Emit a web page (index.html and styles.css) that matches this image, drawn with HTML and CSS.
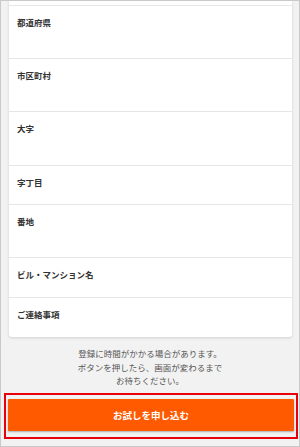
FILE: index.html
```html
<!DOCTYPE html>
<html lang="ja">
<head>
<meta charset="utf-8">
<link rel="stylesheet" href="styles.css">
</head>
<body>
<div class="frame">
  <div class="card">
    <div class="row tall"><span class="label">都道府県</span></div>
    <div class="row tall"><span class="label">市区町村</span></div>
    <div class="row taller"><span class="label">大字</span></div>
    <div class="row short"><span class="label">字丁目</span></div>
    <div class="row tall"><span class="label">番地</span></div>
    <div class="row mid"><span class="label">ビル・マンション名</span></div>
    <div class="row mid"><span class="label">ご連絡事項</span></div>
  </div>
  <p class="note">登録に時間がかかる場合があります。<br>ボタンを押したら、画面が変わるまで<br>お待ちください。</p>
  <div class="highlight">
    <button class="submit">お試しを申し込む</button>
  </div>
</div>
</body>
</html>
```

FILE: styles.css
```css
html, body {
  margin: 0;
  padding: 0;
}
body {
  font-family: "Noto Sans CJK JP", "Noto Sans", sans-serif;
  background: #f2f2f2;
}
.frame {
  box-sizing: border-box;
  width: 300px;
  height: 447px;
  border: 1px solid #c9c9c9;
  background: #f2f2f2;
  overflow: hidden;
  display: flex;
  flex-direction: column;
}
.card {
  margin: 0 7px 0 8px;
  padding-top: 4px;
  background: #fff;
  border-radius: 0 0 3px 3px;
  box-shadow: 0 1px 3px rgba(0, 0, 0, 0.14);
  display: flex;
  flex-direction: column;
}
.row {
  box-sizing: border-box;
  border-top: 1px solid #e6e6e6;
  padding: 11px 0 0 8px;
}
.row.tall { height: 53px; }
.row.taller { height: 54px; }
.row.short { height: 39px; }
.row.mid { height: 40px; }
.label {
  display: block;
  font-size: 8.5px;
  line-height: 10px;
  font-weight: bold;
  color: #333;
}
.note {
  margin: 10px 0 0;
  text-align: center;
  font-size: 8.5px;
  line-height: 13.5px;
  color: #555;
}
.highlight {
  margin: 5px 1px 0 3px;
  border: 2px solid #e8000b;
  padding: 4px 2px 6px 2px;
}
.submit {
  display: block;
  width: 100%;
  height: 32px;
  border: 0;
  border-radius: 1px;
  background: #ff5a00;
  box-shadow: 0 1px 2px rgba(0, 0, 0, 0.3);
  color: #fff;
  font-family: "Noto Sans CJK JP", "Noto Sans", sans-serif;
  font-size: 9.5px;
  font-weight: bold;
  padding: 0;
}
```
